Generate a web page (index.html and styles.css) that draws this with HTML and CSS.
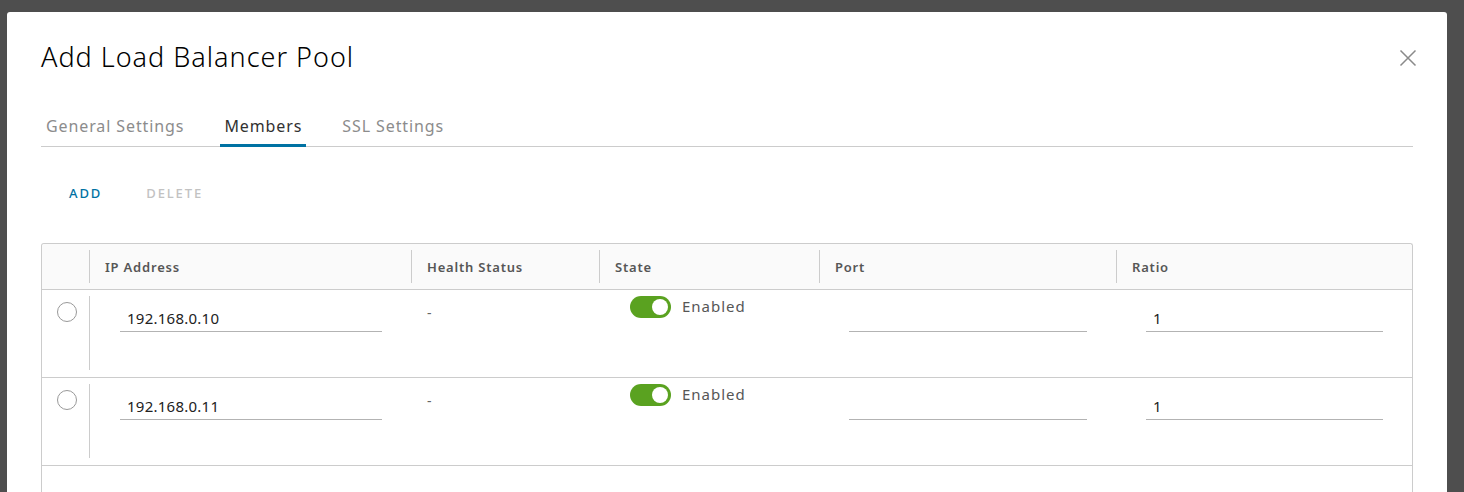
FILE: index.html
```html
<!DOCTYPE html>
<html lang="en">
<head>
  <meta charset="UTF-8" />
  <title>Add Load Balancer Pool</title>
  <link rel="stylesheet" href="styles.css">
</head>
<body>
  <div class="backdrop">
    <div class="modal">
      <div class="modal-header">
        <h3 class="modal-title">Add Load Balancer Pool</h3>
        <button class="close" aria-label="Close">
          <svg width="18" height="18" viewBox="0 0 18 18">
            <path d="M1.5 1.5 L16.5 16.5 M16.5 1.5 L1.5 16.5" stroke="#8a8a8a" stroke-width="1.5" fill="none" />
          </svg>
        </button>
      </div>

      <ul class="tabs">
        <li class="tab">General Settings</li>
        <li class="tab active">Members</li>
        <li class="tab">SSL Settings</li>
      </ul>

      <div class="toolbar">
        <button class="btn-link">ADD</button>
        <button class="btn-link disabled">DELETE</button>
      </div>

      <div class="grid">
        <div class="grid-row grid-head">
          <div class="cell cell-select"></div>
          <div class="cell sep">IP Address</div>
          <div class="cell sep">Health Status</div>
          <div class="cell sep">State</div>
          <div class="cell sep">Port</div>
          <div class="cell sep">Ratio</div>
        </div>

        <div class="grid-row">
          <div class="cell cell-select"><span class="radio"></span></div>
          <div class="cell sep input-cell"><div class="input">192.168.0.10</div></div>
          <div class="cell text-cell">-</div>
          <div class="cell toggle-cell"><span class="toggle"></span><span class="toggle-label">Enabled</span></div>
          <div class="cell input-cell"><div class="input"></div></div>
          <div class="cell input-cell"><div class="input">1</div></div>
        </div>

        <div class="grid-row">
          <div class="cell cell-select"><span class="radio"></span></div>
          <div class="cell sep input-cell"><div class="input">192.168.0.11</div></div>
          <div class="cell text-cell">-</div>
          <div class="cell toggle-cell"><span class="toggle"></span><span class="toggle-label">Enabled</span></div>
          <div class="cell input-cell"><div class="input"></div></div>
          <div class="cell input-cell"><div class="input">1</div></div>
        </div>
      </div>
    </div>
  </div>
</body>
</html>
```

FILE: styles.css
```css
html, body {
  margin: 0;
  padding: 0;
  height: 100%;
  overflow: hidden;
}
body {
  font-family: "Noto Sans", sans-serif;
  background-color: #4e4e4e;
  color: #313131;
}
.backdrop {
  padding: 12px 17px 0 7px;
  height: 100%;
  box-sizing: border-box;
}
.modal {
  display: flex;
  flex-direction: column;
  background-color: #fff;
  border-radius: 3px 3px 0 0;
  height: 100%;
  padding: 0 34px;
  box-sizing: border-box;
}
.modal-header {
  display: flex;
  justify-content: space-between;
  align-items: flex-start;
  padding-top: 27px;
}
.modal-title {
  margin: 0;
  font-size: 27px;
  font-weight: 300;
  letter-spacing: 1px;
  line-height: 36px;
  color: #000;
}
.close {
  background: none;
  border: none;
  padding: 0;
  margin: 10px -4px 0 0;
  cursor: pointer;
}
.tabs {
  list-style: none;
  margin: 33px 0 0 0;
  padding: 0 0 0 1px;
  display: flex;
  gap: 32px;
  border-bottom: 1px solid #cccccc;
}
.tab {
  padding: 0 4px;
  font-size: 16px;
  letter-spacing: 0.9px;
  line-height: 36px;
  color: #8c8c8c;
  border-bottom: 3px solid transparent;
  margin-bottom: -1px;
}
.tab.active {
  color: #313131;
  border-bottom-color: #0072a3;
}
.toolbar {
  display: flex;
  gap: 44px;
  padding: 34px 0 0 28px;
  height: 62px;
  flex-shrink: 0;
}
.btn-link {
  background: none;
  border: none;
  padding: 0;
  font-family: inherit;
  font-size: 13px;
  font-weight: 500;
  letter-spacing: 1.9px;
  color: #0072a3;
  height: 24px;
  cursor: pointer;
}
.btn-link.disabled {
  color: #c2c2c2;
}
.grid {
  flex: 1;
  border: 1px solid #cccccc;
  border-bottom: none;
  border-radius: 3px 3px 0 0;
}
.grid-row {
  display: grid;
  grid-template-columns: 47px 322px 188px 220px 297px 1fr;
  padding: 6px 0 7px;
  border-bottom: 1px solid #cccccc;
  height: 74px;
}
.grid-head {
  background-color: #fafafa;
  height: 33px;
  padding: 6px 0;
  border-radius: 3px 3px 0 0;
}
.cell {
  padding: 0 15px;
  font-size: 14px;
}
.grid-head .cell {
  display: flex;
  align-items: center;
  font-size: 13px;
  font-weight: 600;
  letter-spacing: 0.8px;
  color: #565656;
}
.sep {
  border-left: 1px solid #cccccc;
}
.cell-select {
  padding: 6px 0 0 15px;
}
.radio {
  display: block;
  width: 18px;
  height: 18px;
  border: 1px solid #999;
  border-radius: 50%;
}
.input-cell {
  padding: 12px 29px 0 30px;
}
.input {
  height: 23px;
  line-height: 20px;
  padding: 0 7px;
  border-bottom: 1px solid #b3b3b3;
  font-size: 15px;
  letter-spacing: 0.25px;
  color: #222;
}
.text-cell {
  padding: 7px 16px 0;
  color: #666;
}
.toggle-cell {
  display: flex;
  align-items: flex-start;
  gap: 11px;
  padding-left: 31px;
}
.toggle {
  position: relative;
  width: 41px;
  height: 22px;
  border-radius: 11px;
  background-color: #5aa220;
  flex-shrink: 0;
}
.toggle::after {
  content: "";
  position: absolute;
  right: 3px;
  top: 3px;
  width: 16px;
  height: 16px;
  border-radius: 50%;
  background-color: #fff;
}
.toggle-label {
  font-size: 15px;
  letter-spacing: 1px;
  line-height: 20px;
  color: #565656;
}
```
